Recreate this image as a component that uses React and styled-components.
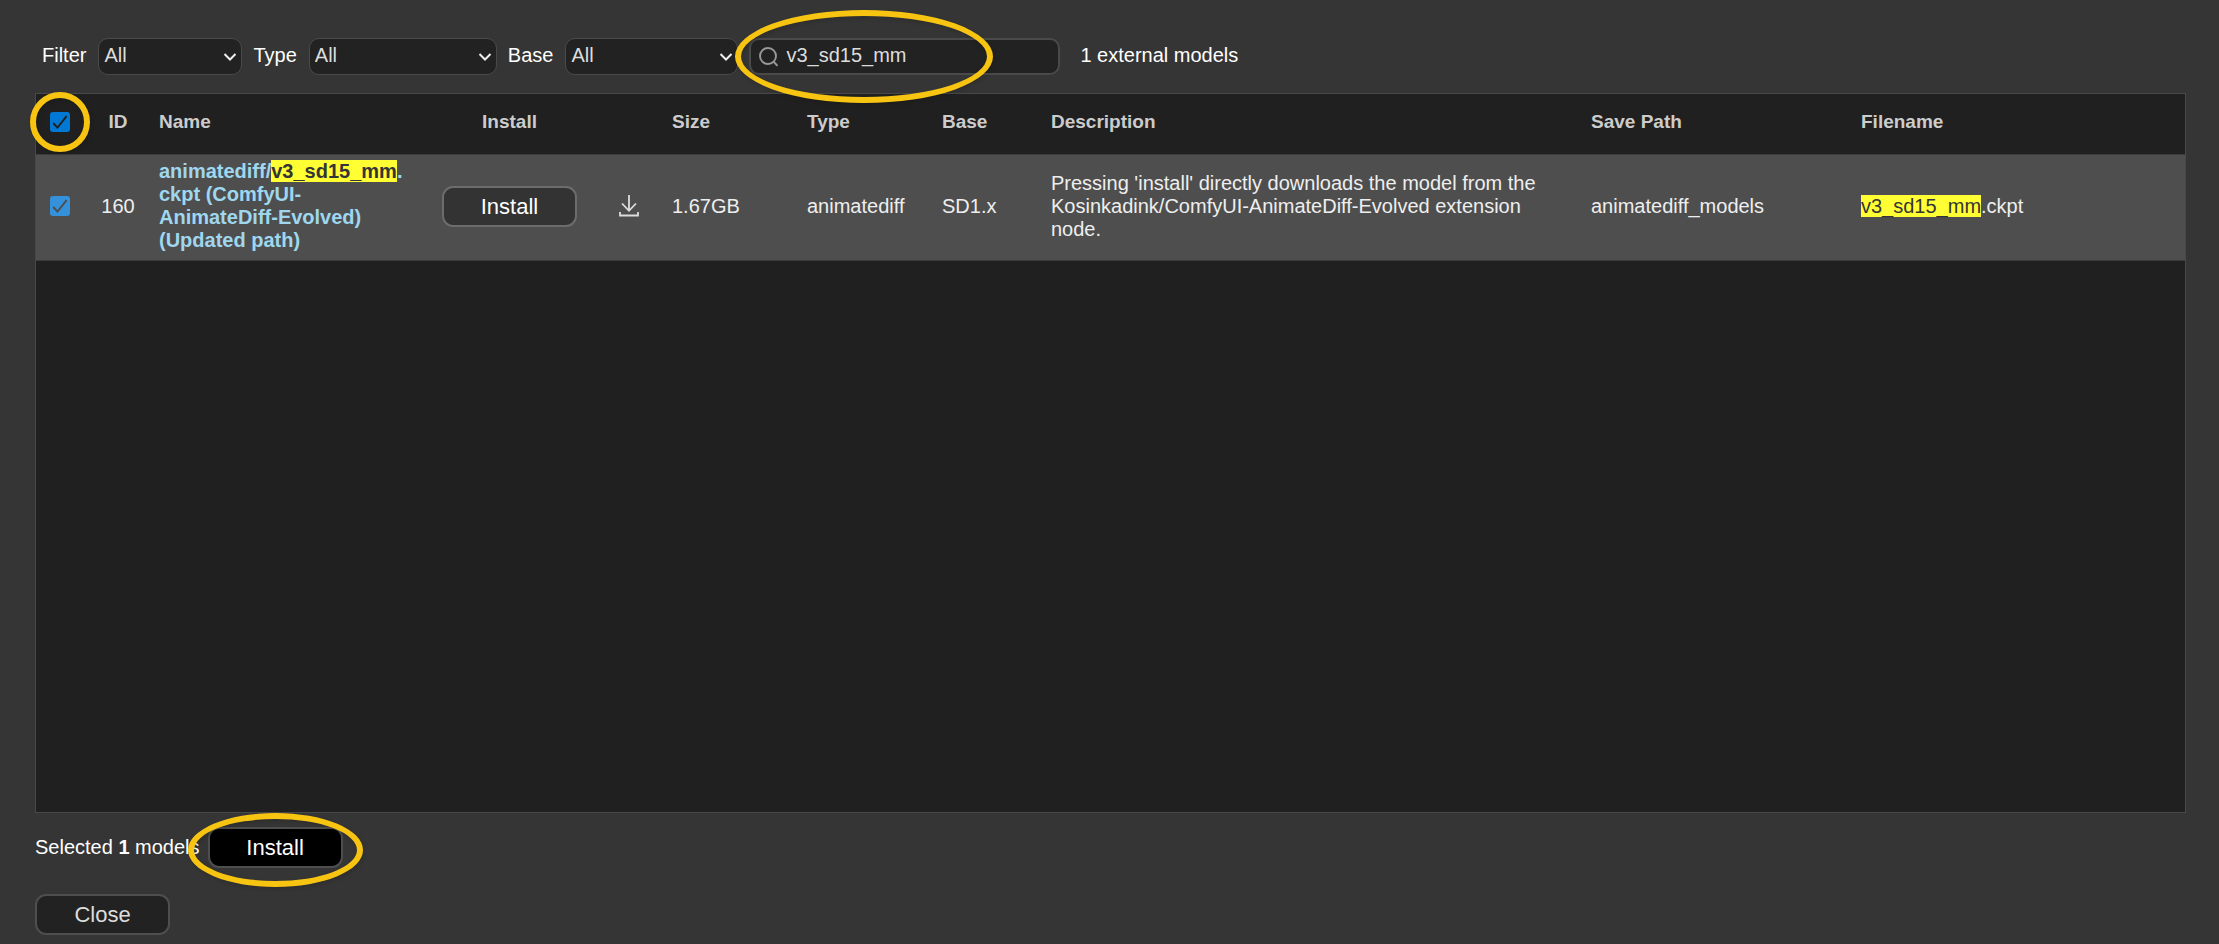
import React, { useState } from "react";
import styled, { createGlobalStyle } from "styled-components";

const GlobalStyle = createGlobalStyle`
  *, *::before, *::after { box-sizing: border-box; }
  body {
    margin: 0;
    background: #353535;
    color: #fff;
    font: 20px/23px "Liberation Sans", Arial, sans-serif;
  }
`;

const Dialog = styled.main`
  display: flex;
  flex-direction: column;
  min-height: 100vh;
  padding: 38px 33px 9px 35px;
`;

const Toolbar = styled.form`
  display: flex;
  align-items: center;
  gap: 11px;
  height: 37px;
  margin-bottom: 18px;
  padding-left: 7px;
`;

const Field = styled.label`
  display: flex;
  align-items: center;
  gap: 12px;
  white-space: nowrap;
`;

const Caption = styled.span`
  padding-bottom: 2px;
`;

const SelectBox = styled.span`
  position: relative;
  display: block;
  width: ${(p) => p.$width}px;
`;

const Select = styled.select`
  appearance: none;
  display: block;
  width: 100%;
  height: 37px;
  padding: 0 24px 2px 5px;
  border: 1px solid #4a4a4a;
  border-radius: 10px;
  background: #222;
  color: #ddd;
  font: inherit;
`;

const Chevron = styled.svg`
  position: absolute;
  right: 5px;
  top: 14px;
  pointer-events: none;
`;

const SearchBox = styled.div`
  position: relative;
  display: flex;
  align-items: center;
  width: 311px;
`;

const SearchInput = styled.input`
  width: 100%;
  height: 37px;
  padding: 0 10px 2px 35px;
  border: 2px solid #4a4a4a;
  border-radius: 10px;
  background: #222;
  color: #ddd;
  font: inherit;
`;

const SearchIcon = styled.svg`
  position: absolute;
  left: 9px;
  top: 8px;
  pointer-events: none;
`;

const Count = styled.output`
  padding: 0 0 2px 9px;
  white-space: nowrap;
`;

const Grid = styled.section`
  flex: 1;
  border: 1px solid #484848;
  background: #202020;
`;

const Table = styled.table`
  width: 100%;
  table-layout: fixed;
  border-collapse: collapse;
`;

const HeadCell = styled.th`
  height: 60px;
  padding: 0 11px 4px;
  border-bottom: 1px solid #3c3c3c;
  color: #ccc;
  font-size: 19px;
  text-align: ${(p) => p.$align || "left"};
`;

const Row = styled.tr`
  background: #4e4e4e;
`;

const Cell = styled.td`
  height: 106px;
  padding: 0 ${(p) => (p.$align ? 0 : 11)}px 2px;
  border-bottom: 1px solid #3c3c3c;
  color: #eee;
  text-align: ${(p) => p.$align || "left"};
`;

const CheckCell = styled(Cell)`
  padding: 0 4px 2px 0;
`;

const CheckHead = styled(HeadCell)`
  padding: 0 4px 4px 0;
`;

const ModelLink = styled.a`
  display: block;
  color: #9fd7ee;
  font-weight: bold;
  text-decoration: none;
  white-space: nowrap;
`;

const Mark = styled.mark`
  background: #ff3;
  color: #353535;
`;

const CheckLabel = styled.label`
  position: relative;
  display: block;
  width: 20px;
  height: 20px;
  margin: 0 auto;
`;

const CheckInput = styled.input`
  appearance: none;
  display: block;
  width: 20px;
  height: 20px;
  margin: 0;
  border-radius: 3px;
  background: ${(p) => (p.$soft ? "#3491da" : "#0078d4")};
`;

const Tick = styled.svg`
  position: absolute;
  inset: 0;
  pointer-events: none;
`;

const Button = styled.button`
  display: block;
  width: 135px;
  height: 41px;
  margin: ${(p) => (p.$centered ? "0 auto" : 0)};
  padding: 0;
  border: 2px solid ${(p) => p.$edge || "#4e4e4e"};
  border-radius: 11px;
  background: ${(p) => p.$fill || "#222"};
  color: ${(p) => p.$ink || "#fff"};
  font: 22px/25px "Liberation Sans", Arial, sans-serif;
`;

const IconLink = styled.a`
  display: inline-block;
  color: #ddd;
  vertical-align: middle;
`;

const SelectionBar = styled.div`
  display: flex;
  align-items: center;
  gap: 8px;
  margin-top: 14px;
`;

const Footer = styled.footer`
  margin-top: 26px;
`;

const Anchor = styled.div`
  position: relative;
`;

const Ring = styled.span`
  position: absolute;
  inset: ${(p) => p.$inset};
  z-index: 1;
  border: 6px solid #f8c412;
  border-radius: 50%;
  box-shadow: 1px 2px 4px rgba(0, 0, 0, 0.15), inset 1px 2px 4px rgba(0, 0, 0, 0.15);
  pointer-events: none;
`;

function Dropdown({ label, width }) {
  return (
    <Field>
      <Caption>{label}</Caption>
      <SelectBox $width={width}>
        <Select defaultValue="All">
          <option>All</option>
        </Select>
        <Chevron width="14" height="10" viewBox="0 0 14 10" fill="none" stroke="#eee" strokeWidth="2">
          <path d="M1.5 2 7 7.5 12.5 2" />
        </Chevron>
      </SelectBox>
    </Field>
  );
}

function Check({ label, soft, children, ...rest }) {
  return (
    <CheckLabel>
      <CheckInput type="checkbox" aria-label={label} $soft={soft} {...rest} />
      {rest.checked && (
        <Tick width="20" height="20" viewBox="0 0 20 20" fill="none" stroke={soft ? "#4e4e4e" : "#202020"} strokeWidth="1.9">
          <path d="M3.2 11 7.5 15.6 16.6 4.2" />
        </Tick>
      )}
      {children}
    </CheckLabel>
  );
}

const columns = [
  { title: "Name", width: 274 },
  { title: "Install", width: 175, align: "center" },
  { title: "", width: 64 },
  { title: "Size", width: 135 },
  { title: "Type", width: 135 },
  { title: "Base", width: 109 },
  { title: "Description", width: 540 },
  { title: "Save Path", width: 270 },
  { title: "Filename" },
];

export default function App() {
  const [selected, setSelected] = useState(true);
  const [query, setQuery] = useState("v3_sd15_mm");
  const toggle = () => setSelected(!selected);

  return (
    <>
      <GlobalStyle />
      <Dialog>
        <Toolbar onSubmit={(e) => e.preventDefault()}>
          <Dropdown label="Filter" width={144} />
          <Dropdown label="Type" width={188} />
          <Dropdown label="Base" width={173} />
          <SearchBox>
            <SearchInput aria-label="Search" value={query} onChange={(e) => setQuery(e.target.value)} />
            <SearchIcon width="22" height="22" viewBox="0 0 22 22" fill="none" stroke="#999" strokeWidth="1.9">
              <circle cx="10" cy="10" r="8" />
              <path d="M15.5 15.5 19.5 19.8" />
            </SearchIcon>
            <Ring $inset="-28px 67px -28px -14px" />
          </SearchBox>
          <Count>1 external models</Count>
        </Toolbar>

        <Grid>
          <Table>
            <colgroup>
              <col width="52" />
              <col width="60" />
              {columns.map((c, i) => (
                <col key={i} width={c.width} />
              ))}
            </colgroup>
            <thead>
              <tr>
                <CheckHead>
                  <Check label="Select all" checked={selected} onChange={toggle}>
                    <Ring $inset="-20px" />
                  </Check>
                </CheckHead>
                <HeadCell $align="center">ID</HeadCell>
                {columns.map((c, i) => (
                  <HeadCell key={i} $align={c.align}>{c.title}</HeadCell>
                ))}
              </tr>
            </thead>
            <tbody>
              <Row>
                <CheckCell>
                  <Check label="Select model 160" soft checked={selected} onChange={toggle} />
                </CheckCell>
                <Cell $align="center">160</Cell>
                <Cell>
                  <ModelLink href="#model">
                    animatediff/<Mark>v3_sd15_mm</Mark>.<br />
                    ckpt (ComfyUI-<br />
                    AnimateDiff-Evolved)<br />
                    (Updated path)
                  </ModelLink>
                </Cell>
                <Cell $align="center">
                  <Button type="button" $centered $fill="#333" $edge="#6c6c6c">Install</Button>
                </Cell>
                <Cell $align="center">
                  <IconLink href="#download" aria-label="Download">
                    <svg width="22" height="24" viewBox="0 0 22 24" fill="none" stroke="currentColor" strokeWidth="1.8" display="block">
                      <path d="M11 1V17M4 9.5 11 16.8 18 9.5M2 18V21.5H20V18" />
                    </svg>
                  </IconLink>
                </Cell>
                <Cell>1.67GB</Cell>
                <Cell>animatediff</Cell>
                <Cell>SD1.x</Cell>
                <Cell>
                  Pressing 'install' directly downloads the model from the Kosinkadink/ComfyUI-AnimateDiff-Evolved extension node.
                </Cell>
                <Cell>animatediff_models</Cell>
                <Cell><Mark>v3_sd15_mm</Mark>.ckpt</Cell>
              </Row>
            </tbody>
          </Table>
        </Grid>

        <SelectionBar>
          <span>Selected <b>1</b> models</span>
          <Anchor>
            <Button type="button" $fill="#000">Install</Button>
            <Ring $inset="-14px -20px -19px" />
          </Anchor>
        </SelectionBar>
        <Footer>
          <Button type="button" $ink="#ddd">Close</Button>
        </Footer>
      </Dialog>
    </>
  );
}
